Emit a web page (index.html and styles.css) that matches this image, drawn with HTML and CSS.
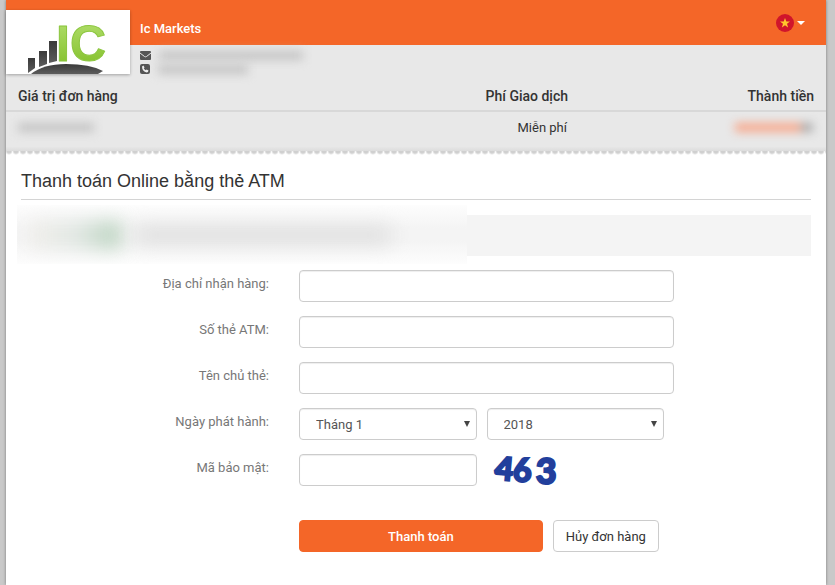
FILE: index.html
```
<!DOCTYPE html>
<html lang="vi">
<head>
    <meta charset="UTF-8">
    <meta name="viewport" content="width=device-width, initial-scale=1">
    <title>Ic Markets</title>
    <link rel="stylesheet" href="styles.css">
</head>
<body>
    <div class="container">
        <header class="header">
            <div class="logo">
                <svg viewBox="0 0 124 64" role="img" aria-label="Ic Markets">
                    <defs>
                        <linearGradient id="green" x1="0" y1="0" x2="0" y2="1">
                            <stop offset="0" stop-color="#b4e070"/>
                            <stop offset="1" stop-color="#7fbd25"/>
                        </linearGradient>
                        <linearGradient id="dark" x1="0" y1="0" x2="0" y2="1">
                            <stop offset="0" stop-color="#3a3a3a"/>
                            <stop offset="1" stop-color="#5c5c5c"/>
                        </linearGradient>
                    </defs>
                    <g fill="url(#dark)">
                        <path d="M22 48h7v10l-7 5z"/>
                        <path d="M33 41h8v13l-8 3z"/>
                        <path d="M43 31h8v20l-8 2z"/>
                        <path d="M25 64Q37 54 60 54Q84 54 97 61L92 64z"/>
                    </g>
                    <text class="logo-text" x="50" y="51">IC</text>
                </svg>
            </div>
            <div class="merchant">
                <div class="topbar">
                    <span class="name">Ic Markets</span>
                    <button class="lang" type="button" aria-label="Tiếng Việt">
                        <svg width="18" height="18" viewBox="0 0 18 18">
                            <circle cx="9" cy="9" r="9" fill="#d0152b"/>
                            <path fill="#ffc72c" d="M9 4l1.300 3.500h3.700l-3 2.300 1.100 3.600L9 11.200l-3.100 2.200L7 9.800 4 7.500h3.700z"/>
                        </svg>
                        <span class="caret"></span>
                    </button>
                </div>
                <div class="contact">
                    <svg width="11" height="9" viewBox="0 0 11 9">
                        <rect width="11" height="9" rx="1" fill="#555"/>
                        <path d="M0 2l4.500 3.500q1 .7 2 0L11 2" fill="none" stroke="#e8e8e8"/>
                    </svg>
                    <span class="hidden-text mail"></span>
                </div>
                <div class="contact">
                    <svg width="10" height="10" viewBox="0 0 10 10">
                        <rect width="10" height="10" rx="2" fill="#555"/>
                        <path d="M2 2.500L3.500 1.500 4.500 3.500 3.800 4.300Q4.500 5.600 5.800 6.200L6.600 5.500 8.500 6.500Q8.300 8.400 6.700 8.400Q2.200 7.800 2 2.500z" fill="#eee"/>
                    </svg>
                    <span class="hidden-text phone"></span>
                </div>
            </div>
        </header>

        <table class="order">
            <thead>
                <tr>
                    <th>Giá trị đơn hàng</th>
                    <th>Phí Giao dịch</th>
                    <th>Thành tiền</th>
                </tr>
            </thead>
            <tbody>
                <tr>
                    <td><span class="hidden-text amount"></span></td>
                    <td>Miễn phí</td>
                    <td><span class="hidden-text total"></span></td>
                </tr>
            </tbody>
        </table>
        <div class="zigzag"></div>

        <main class="content">
            <h1>Thanh toán Online bằng thẻ ATM</h1>
            <div class="bank">
                <div class="bank-cover">
                    <span class="bank-logo"></span>
                    <span class="bank-name"></span>
                </div>
            </div>

            <form>
                <div class="row">
                    <label for="address">Địa chỉ nhận hàng:</label>
                    <input type="text" id="address">
                </div>
                <div class="row">
                    <label for="card">Số thẻ ATM:</label>
                    <input type="text" id="card">
                </div>
                <div class="row">
                    <label for="owner">Tên chủ thẻ:</label>
                    <input type="text" id="owner">
                </div>
                <div class="row">
                    <label for="month">Ngày phát hành:</label>
                    <div class="pair">
                        <div class="select">
                            <select id="month">
                                <option>Tháng 1</option>
                            </select>
                        </div>
                        <div class="select">
                            <select id="year" aria-label="Năm">
                                <option>2018</option>
                            </select>
                        </div>
                    </div>
                </div>
                <div class="row">
                    <label for="code">Mã bảo mật:</label>
                    <div class="pair">
                        <input type="text" id="code">
                        <div class="captcha"><span class="left">4</span><span>6</span><span class="big">3</span></div>
                    </div>
                </div>
                <div class="row actions">
                    <div class="buttons">
                        <button class="btn primary" type="submit">Thanh toán</button>
                        <button class="btn" type="button">Hủy đơn hàng</button>
                    </div>
                </div>
            </form>
        </main>
    </div>
</body>
</html>
```
FILE: styles.css
```
* {
    box-sizing: border-box;
}
body {
    margin: 0;
    background: #c9c9c9;
    font-family: Roboto, "Liberation Sans", sans-serif;
    font-size: 13px;
    line-height: 18px;
    color: #333;
}
.container {
    margin: 0 9px 0 6px;
    min-height: 100vh;
    background: #fff;
    box-shadow: 0 0 3px rgba(0,0,0,0.4);
}

/* header */
.header {
    display: flex;
    background: linear-gradient(#f46628 45px, #e8e8e8 45px);
}
.logo {
    width: 124px;
    height: 64px;
    margin-top: 10px;
    background: #fff;
    box-shadow: 0 1px 3px rgba(0,0,0,0.3);
}
.logo svg {
    display: block;
}
.logo-text {
    font-family: "Liberation Sans", sans-serif;
    font-size: 50px;
    font-weight: bold;
    fill: url(#green);
    stroke: #8cc63f;
    stroke-linejoin: round;
}
.merchant {
    flex: 1;
    padding-left: 10px;
}
.topbar {
    display: flex;
    justify-content: space-between;
    align-items: center;
    height: 45px;
    padding: 12px 21px 0 0;
    margin-bottom: 3px;
    color: #fff;
}
.name {
    font-weight: 500;
}
.lang {
    display: flex;
    align-items: center;
    gap: 3px;
    padding: 0;
    margin-bottom: 12px;
    border: none;
    background: none;
    cursor: pointer;
}
.caret {
    border: 4px solid transparent;
    border-top-color: #fff;
    border-bottom: 0;
}
.contact {
    display: flex;
    align-items: center;
    gap: 8px;
    height: 14px;
}

/* blurred private data */
.hidden-text {
    display: inline-block;
    height: 9px;
    background: #c4c4c4;
    filter: blur(5px);
}
.mail {
    width: 144px;
}
.phone {
    width: 90px;
}
.amount {
    width: 76px;
}
.total {
    width: 78px;
    background: linear-gradient(90deg, #f7a88c 85%, #aaa 85%);
}

/* order table */
.order {
    width: 100%;
    border-collapse: collapse;
    table-layout: fixed;
    background: linear-gradient(#e8e8e8 94%, #dcdcdc);
}
.order th,
.order td {
    padding: 11px 12px 5px;
    text-align: right;
}
.order th {
    font-size: 14px;
    font-weight: 500;
    border-bottom: 2px solid #d8d8d8;
}
.order td {
    height: 40px;
    padding: 6px 13px 14px 12px;
}
.order th:first-child,
.order td:first-child {
    width: 40%;
    text-align: left;
}
.order th:last-child,
.order td:last-child {
    width: 30%;
}
.zigzag {
    height: 4px;
    background: radial-gradient(circle at 3px 0, #d0d0d0 2px, #fff 4px) 0 0 / 7px 4px;
}

/* payment form */
.content {
    padding: 14px 15px 32px;
}
h1 {
    margin: 0 0 15px;
    padding-bottom: 6px;
    border-bottom: 1px solid #d4d4d4;
    font-family: "Liberation Sans", Arial, sans-serif;
    font-size: 18px;
    font-weight: normal;
    line-height: 24px;
}
.bank {
    position: relative;
    height: 41px;
    margin-bottom: 14px;
    background: #f4f4f4;
}
.bank-cover {
    position: absolute;
    top: -10px;
    left: -4px;
    width: 57%;
    height: 59px;
    display: flex;
    align-items: center;
    overflow: hidden;
    background: linear-gradient(#fdfdfd, #f4f4f4 40%, #f4f4f4 60%, #fdfdfd);
}
.bank-logo {
    width: 90px;
    height: 28px;
    margin-left: 14px;
    background: linear-gradient(90deg, #f0eeea, #e2e8e4 50%, #b8d2bd);
    filter: blur(9px);
}
.bank-name {
    width: 256px;
    height: 16px;
    margin-left: 14px;
    background: #dcdcdc;
    filter: blur(10px);
}
.row {
    display: grid;
    grid-template-columns: 248fr 375fr 107fr;
    column-gap: 30px;
    margin-bottom: 14px;
}
label {
    padding-top: 5px;
    text-align: right;
    color: #777;
}
input,
select {
    width: 100%;
    height: 32px;
    padding: 6px 12px;
    border: 1px solid #ccc;
    border-radius: 4px;
    background: #fff;
    box-shadow: inset 0 1px 1px rgba(0,0,0,0.07);
    font-family: inherit;
    font-size: 13px;
    color: #555;
}
select {
    padding-left: 16px;
    appearance: none;
}
.select {
    position: relative;
}
.select::after {
    content: "";
    position: absolute;
    top: 13px;
    right: 7px;
    border: 3px solid transparent;
    border-top: 6px solid #444;
    border-bottom: 0;
    pointer-events: none;
}
.pair {
    display: grid;
    grid-template-columns: 1fr 1fr;
    gap: 10px;
    padding-right: 10px;
}
.captcha {
    display: flex;
    align-items: center;
    height: 32px;
    padding-left: 8px;
    font-family: Lato, sans-serif;
    font-size: 32px;
    font-weight: 900;
    line-height: 28px;
    color: #223f9c;
    -webkit-text-stroke: 2px #223f9c;
}
.captcha .left {
    align-self: flex-start;
    transform: rotate(5deg);
}
.captcha .big {
    margin-left: 4px;
    font-size: 36px;
}
.actions {
    margin: 34px 0 0;
}
.buttons {
    grid-column: 2;
    display: flex;
    gap: 10px;
}
.btn {
    height: 32px;
    padding: 0 12px;
    border: 1px solid #ccc;
    border-radius: 4px;
    background: #fff;
    font-family: inherit;
    font-size: 13px;
    color: #333;
    white-space: nowrap;
    cursor: pointer;
}
.btn.primary {
    width: 65%;
    border-color: #f46628;
    background: #f46628;
    font-weight: 500;
    color: #fff;
}
```
